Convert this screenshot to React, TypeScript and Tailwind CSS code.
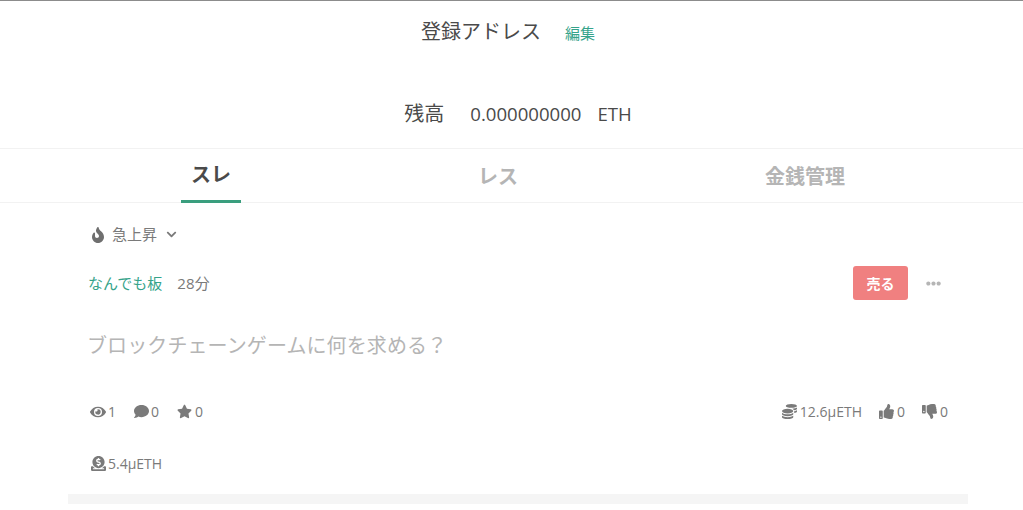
import { FaFire, FaChevronDown, FaEllipsisH, FaEye, FaComment, FaStar, FaCoins, FaThumbsUp, FaThumbsDown, FaDonate } from 'react-icons/fa'

export default function App() {
  return (
    <div className="h-[510px] overflow-hidden bg-white border-t border-[#8c8c8c] font-['Open_Sans','Noto_Sans_CJK_JP',sans-serif] text-[#4a4a4a]">
      <div className="flex h-[148px] flex-col items-center border-b border-[#f2f2f2]">
        <div className="mt-[16px] mr-[7px] flex h-[30px] items-center">
          <span className="text-[20px] leading-[30px]">登録アドレス</span>
          <span className="ml-6 mt-[2px] text-[15px] text-[#35a38a]">編集</span>
        </div>
        <div className="mt-[52px] ml-[13px] flex h-[30px] items-center text-[18.6px]">
          <span className="text-[20px]">残高</span>
          <span className="ml-[26px]">0.000000000</span>
          <span className="ml-4">ETH</span>
        </div>
      </div>

      <div className="flex h-[54px] gap-[227px] border-b border-[#f2f2f2] pl-[181px] text-[20px] font-bold">
        <div className="flex h-[54px] w-[60px] justify-center border-b-[3px] border-[#3a9e7e] pt-[11px] leading-[30px] text-[#4a4a4a]">スレ</div>
        <div className="flex w-[60px] justify-center pt-[13px] leading-[30px] text-[#b5b5b5]">レス</div>
        <div className="flex w-[100px] justify-center pt-[13px] leading-[30px] text-[#b5b5b5]">金銭管理</div>
      </div>

      <div className="mx-[68px] w-[900px] px-5 text-[14px] text-[#7a7a7a]">
        <div className="mt-[21px] flex h-[21px] items-center pl-[2px] text-[15px]">
          <FaFire className="text-[16px] text-[#6f6f6f]" />
          <span className="ml-[6px]">急上昇</span>
          <FaChevronDown className="ml-[9px] text-[11px]" />
        </div>

        <div className="mt-[21px] flex h-[34px] items-center text-[15px]">
          <span className="text-[#35a38a]">なんでも板</span>
          <span className="ml-[15px] tracking-[0.2px]">28分</span>
          <button className="ml-auto h-[34px] w-[55px] rounded-[3px] bg-[#f08080] text-[14px] font-bold text-white">売る</button>
          <FaEllipsisH className="ml-[18px] mr-[7px] text-[15px] text-[#b5b5b5]" />
        </div>

        <div className="mt-[31px] -ml-px text-[20px] leading-[30px] tracking-[0.1px] text-[#b5b5b5]">ブロックチェーンゲームに何を求める？</div>

        <div className="mt-[40px] flex h-[21px] items-center">
          <FaEye className="ml-[2px] text-[16px]" />
          <span className="ml-[2px]">1</span>
          <FaComment className="ml-[18px] text-[15px]" />
          <span className="ml-[2px]">0</span>
          <FaStar className="ml-[18px] text-[15px]" />
          <span className="ml-[3px]">0</span>
          <FaCoins className="ml-auto text-[15px]" />
          <span className="ml-[3px]">12.6μETH</span>
          <FaThumbsUp className="ml-[17px] text-[15px]" />
          <span className="ml-[3px]">0</span>
          <FaThumbsDown className="ml-[17px] text-[15px]" />
          <span className="ml-[3px]">0</span>
        </div>

        <div className="mt-[31px] flex h-[21px] items-center pl-[3px]">
          <FaDonate className="text-[15px]" />
          <span className="ml-[2px]">5.4μETH</span>
        </div>
      </div>

      <div className="mx-[68px] mt-[20px] h-[10px] w-[900px] bg-[#f5f5f5]" />
    </div>
  )
}
